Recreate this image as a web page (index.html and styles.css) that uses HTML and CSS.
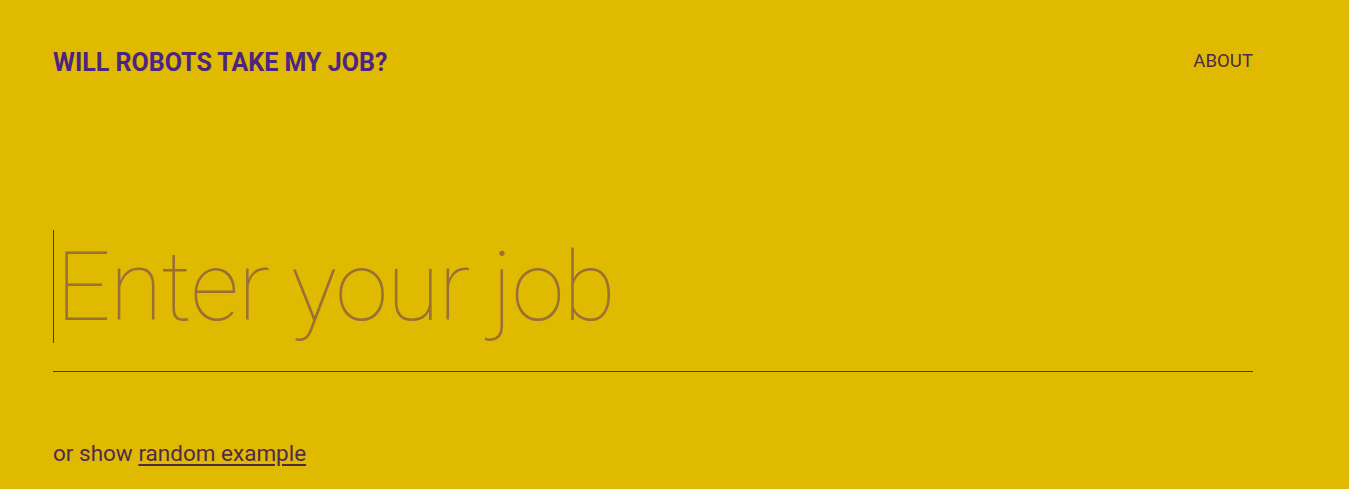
FILE: index.html
```html
<!DOCTYPE html>
<html lang="en">
<head>
<meta charset="utf-8">
<title>Will robots take my job?</title>
<link rel="stylesheet" href="styles.css">
</head>
<body>
<div class="page">
  <header class="header">
    <a class="logo" href="#">WILL ROBOTS TAKE MY JOB?</a>
    <a class="nav" href="#">ABOUT</a>
  </header>
  <main class="main">
    <div class="search">
      <span class="caret"></span>
      <input class="job-input" type="text" placeholder="Enter your job">
    </div>
    <p class="hint">or show <a class="link" href="#">random example</a></p>
  </main>
</div>
</body>
</html>
```
FILE: styles.css
```css
html, body {
  margin: 0;
  padding: 0;
  background: #dfba00;
  font-family: Roboto, "Liberation Sans", sans-serif;
}
.page {
  width: 1200px;
  padding: 0 0 0 53px;
}
.header {
  display: flex;
  justify-content: space-between;
  align-items: center;
  padding-top: 47px;
  height: 30px;
}
.logo {
  color: #4d2383;
  font-weight: 700;
  font-size: 25px;
  text-decoration: none;
}
.nav {
  color: #50294f;
  font-size: 18.6px;
  text-decoration: none;
  margin-top: -2px;
}
.main {
  padding-top: 153px;
}
.search {
  display: flex;
  align-items: stretch;
  border-bottom: 1px solid #5b3526;
  padding-bottom: 28px;
}
.caret {
  width: 1px;
  background: #5b3526;
  flex: none;
}
.job-input {
  flex: 1;
  border: 0;
  outline: none;
  background: transparent;
  font-family: Roboto, "Liberation Sans", sans-serif;
  font-weight: 100;
  font-size: 96px;
  letter-spacing: -1px;
  height: 113px;
  padding: 0 0 0 2px;
  margin: 0;
  color: #50294f;
  caret-color: transparent;
}
.job-input::placeholder {
  color: #9a7035;
  opacity: 1;
}
.hint {
  margin: 68px 0 0 0;
  font-size: 22.5px;
  color: #50294f;
}
.link {
  color: #50294f;
  text-decoration: underline;
  text-underline-offset: 3px;
}
```
